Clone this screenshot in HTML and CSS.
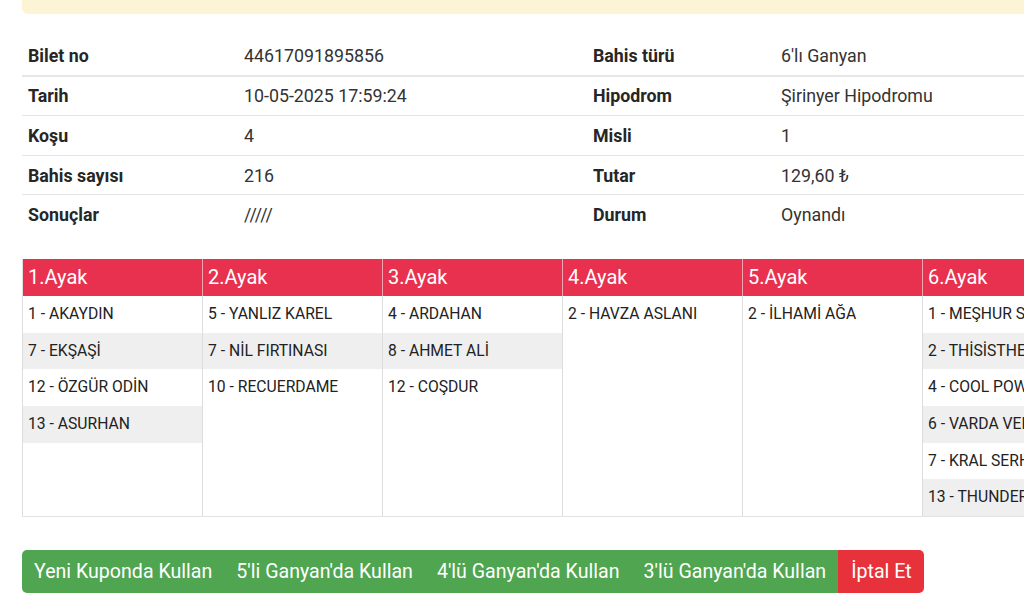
FILE: index.html
```html
<!DOCTYPE html>
<html lang="tr">
<head>
<meta charset="utf-8">
<title>Kupon Detayı</title>
<link rel="stylesheet" href="styles.css">
</head>
<body>
<div class="page">
  <div class="notice"></div>

  <table class="info">
    <tbody>
      <tr class="first"><th>Bilet no</th><td>44617091895856</td><th>Bahis türü</th><td>6'lı Ganyan</td></tr>
      <tr><th>Tarih</th><td>10-05-2025 17:59:24</td><th>Hipodrom</th><td>Şirinyer Hipodromu</td></tr>
      <tr><th>Koşu</th><td>4</td><th>Misli</th><td>1</td></tr>
      <tr><th>Bahis sayısı</th><td>216</td><th>Tutar</th><td>129,60 ₺</td></tr>
      <tr class="last"><th>Sonuçlar</th><td>/////</td><th>Durum</th><td>Oynandı</td></tr>
    </tbody>
  </table>

  <div class="legs">
    <div class="leg">
      <div class="leg-head">1.Ayak</div>
      <ul class="leg-list">
        <li>1 - AKAYDIN</li><li>7 - EKŞAŞİ</li><li>12 - ÖZGÜR ODİN</li><li>13 - ASURHAN</li>
      </ul>
    </div>
    <div class="leg">
      <div class="leg-head">2.Ayak</div>
      <ul class="leg-list">
        <li>5 - YANLIZ KAREL</li><li>7 - NİL FIRTINASI</li><li>10 - RECUERDAME</li>
      </ul>
    </div>
    <div class="leg">
      <div class="leg-head">3.Ayak</div>
      <ul class="leg-list">
        <li>4 - ARDAHAN</li><li>8 - AHMET ALİ</li><li>12 - COŞDUR</li>
      </ul>
    </div>
    <div class="leg">
      <div class="leg-head">4.Ayak</div>
      <ul class="leg-list">
        <li>2 - HAVZA ASLANI</li>
      </ul>
    </div>
    <div class="leg">
      <div class="leg-head">5.Ayak</div>
      <ul class="leg-list">
        <li>2 - İLHAMİ AĞA</li>
      </ul>
    </div>
    <div class="leg">
      <div class="leg-head">6.Ayak</div>
      <ul class="leg-list">
        <li>1 - MEŞHUR SULTAN</li><li>2 - THİSİSTHEONE</li><li>4 - COOL POWER</li><li>6 - VARDA VER</li><li>7 - KRAL SERHAT</li><li>13 - THUNDER</li>
      </ul>
    </div>
  </div>

  <div class="actions">
    <button class="btn btn-green btn-first">Yeni Kuponda Kullan</button>
    <button class="btn btn-green">5'li Ganyan'da Kullan</button>
    <button class="btn btn-green">4'lü Ganyan'da Kullan</button>
    <button class="btn btn-green">3'lü Ganyan'da Kullan</button>
    <button class="btn btn-red btn-last">İptal Et</button>
  </div>
</div>
</body>
</html>
```

FILE: styles.css
```css
html, body {
  margin: 0;
  padding: 0;
  background: #ffffff;
  overflow: hidden;
}

body {
  font-family: Roboto, "Liberation Sans", Arial, sans-serif;
  color: #222222;
}

.page {
  width: 1110px;
  padding-left: 22px;
}

.notice {
  height: 24px;
  margin-top: -10px;
  background: #fdf4d6;
  border-radius: 6px;
}

.info {
  margin-top: 22px;
  width: 1088px;
  border-collapse: collapse;
  font-size: 17.8px;
}

.info th,
.info td {
  height: 38.6px;
  padding: 0 6px;
  text-align: left;
  vertical-align: middle;
  border-bottom: 1px solid #e4e4e4;
}

.info tr.first th,
.info tr.first td {
  border-bottom: 2px solid #e6e6e6;
}

.info tr.last th,
.info tr.last td {
  border-bottom: none;
}

.info th {
  font-weight: 700;
  color: #262626;
}

.info td {
  font-weight: 400;
  color: #333333;
}

.info th:nth-child(1) { width: 204px; }
.info td:nth-child(2) { width: 337px; }
.info th:nth-child(3) { width: 176px; }

.legs {
  margin-top: 25px;
  display: flex;
  border-bottom: 1px solid #e2e2e2;
}

.leg {
  width: 179px;
  flex: none;
  border-left: 1px solid #dddddd;
  display: flex;
  flex-direction: column;
}

.leg-head {
  height: 37px;
  background: #e8304f;
  color: #ffffff;
  font-size: 20px;
  line-height: 37px;
  padding-left: 5px;
  font-weight: 400;
  border-left: 1px solid #f3a3b1;
  margin-left: -1px;
}

.leg:first-child .leg-head {
  border-left: none;
  margin-left: 0;
}

.leg-list {
  list-style: none;
  margin: 0;
  padding: 0;
  height: 220px;
}

.leg-list li {
  height: 36.67px;
  line-height: 35px;
  padding-left: 5px;
  font-size: 15.7px;
  color: #222222;
  white-space: nowrap;
  overflow: hidden;
}

.leg-list li:nth-child(even) {
  background: #efefef;
}

.actions {
  margin-top: 33px;
  display: flex;
}

.btn {
  border: none;
  height: 43px;
  padding: 0 12px;
  font-family: Roboto, "Liberation Sans", Arial, sans-serif;
  font-size: 19.6px;
  color: #ffffff;
  cursor: pointer;
  white-space: nowrap;
}

.btn-green {
  background: #50a551;
}

.btn-red {
  background: #e8323b;
  padding: 0 12px 0 13px;
}

.btn-first {
  border-radius: 5px 0 0 5px;
}

.btn-last {
  border-radius: 0 5px 5px 0;
}
```
